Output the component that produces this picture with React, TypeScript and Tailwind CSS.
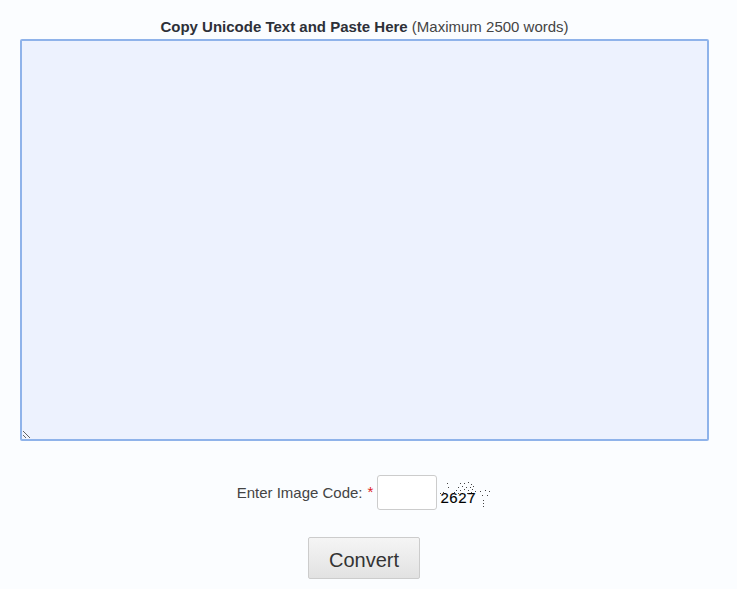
const NOISE = [
  [7, 5], [8, 9], [3, 14], [20, 5], [24, 5], [28, 4], [31, 6], [18, 9], [22, 8], [26, 9], [30, 9], [33, 8],
  [16, 12], [20, 12], [24, 11], [28, 12], [32, 11], [35, 13], [14, 14], [18, 15], [23, 15], [27, 15], [31, 14],
  [40, 13], [45, 12], [49, 13], [42, 17], [47, 17], [43, 22], [43, 25], [43, 28], [0, 15],
]

function Captcha() {
  return (
    <div className="relative ml-[3px] h-[30px] w-[52px]">
      <span className="absolute left-0 top-[10px] font-['Liberation_Sans',sans-serif] text-[15px] leading-[20px] tracking-[0.6px] text-black [-webkit-text-stroke:0.15px_black]">
        2627
      </span>
      <svg className="absolute inset-0" width="52" height="30" viewBox="0 0 52 30">
        {NOISE.map(([x, y]) => (
          <rect key={`${x}-${y}`} x={x} y={y} width="1" height="1" fill="#444" />
        ))}
      </svg>
    </div>
  )
}

export default function App() {
  return (
    <div className="h-[589px] w-[737px] overflow-hidden bg-[#fbfdff] pl-5 pr-7 font-['Liberation_Sans',Arial,sans-serif] text-[#444]">
      <div className="pt-[17px] text-center text-[15px] leading-[20px]">
        <b className="text-[#2d3038]">Copy Unicode Text and Paste Here</b> (Maximum 2500 words)
      </div>
      <textarea
        dir="rtl"
        className="mt-[2px] block h-[402px] w-[689px] rounded-[2px] border-2 border-[#8fb3ea] bg-[#edf2fe] outline-none"
      />
      <div className="mt-[34px] flex items-center justify-center text-[15px]">
        <span className="pt-[1px]">Enter Image Code:</span>
        <span className="ml-[5px] mr-[4px] text-[#e02020]">*</span>
        <input className="h-[35px] w-[60px] rounded-[3px] border border-[#ccc] bg-white outline-none" />
        <Captcha />
      </div>
      <div className="mt-[27px] flex justify-center pr-[1px]">
        <button className="h-[42px] w-[112px] rounded-[2px] border border-[#ccc] bg-gradient-to-b from-[#f5f5f5] to-[#e2e2e2] pt-[3px] text-[20px] text-[#333]">
          Convert
        </button>
      </div>
    </div>
  )
}
